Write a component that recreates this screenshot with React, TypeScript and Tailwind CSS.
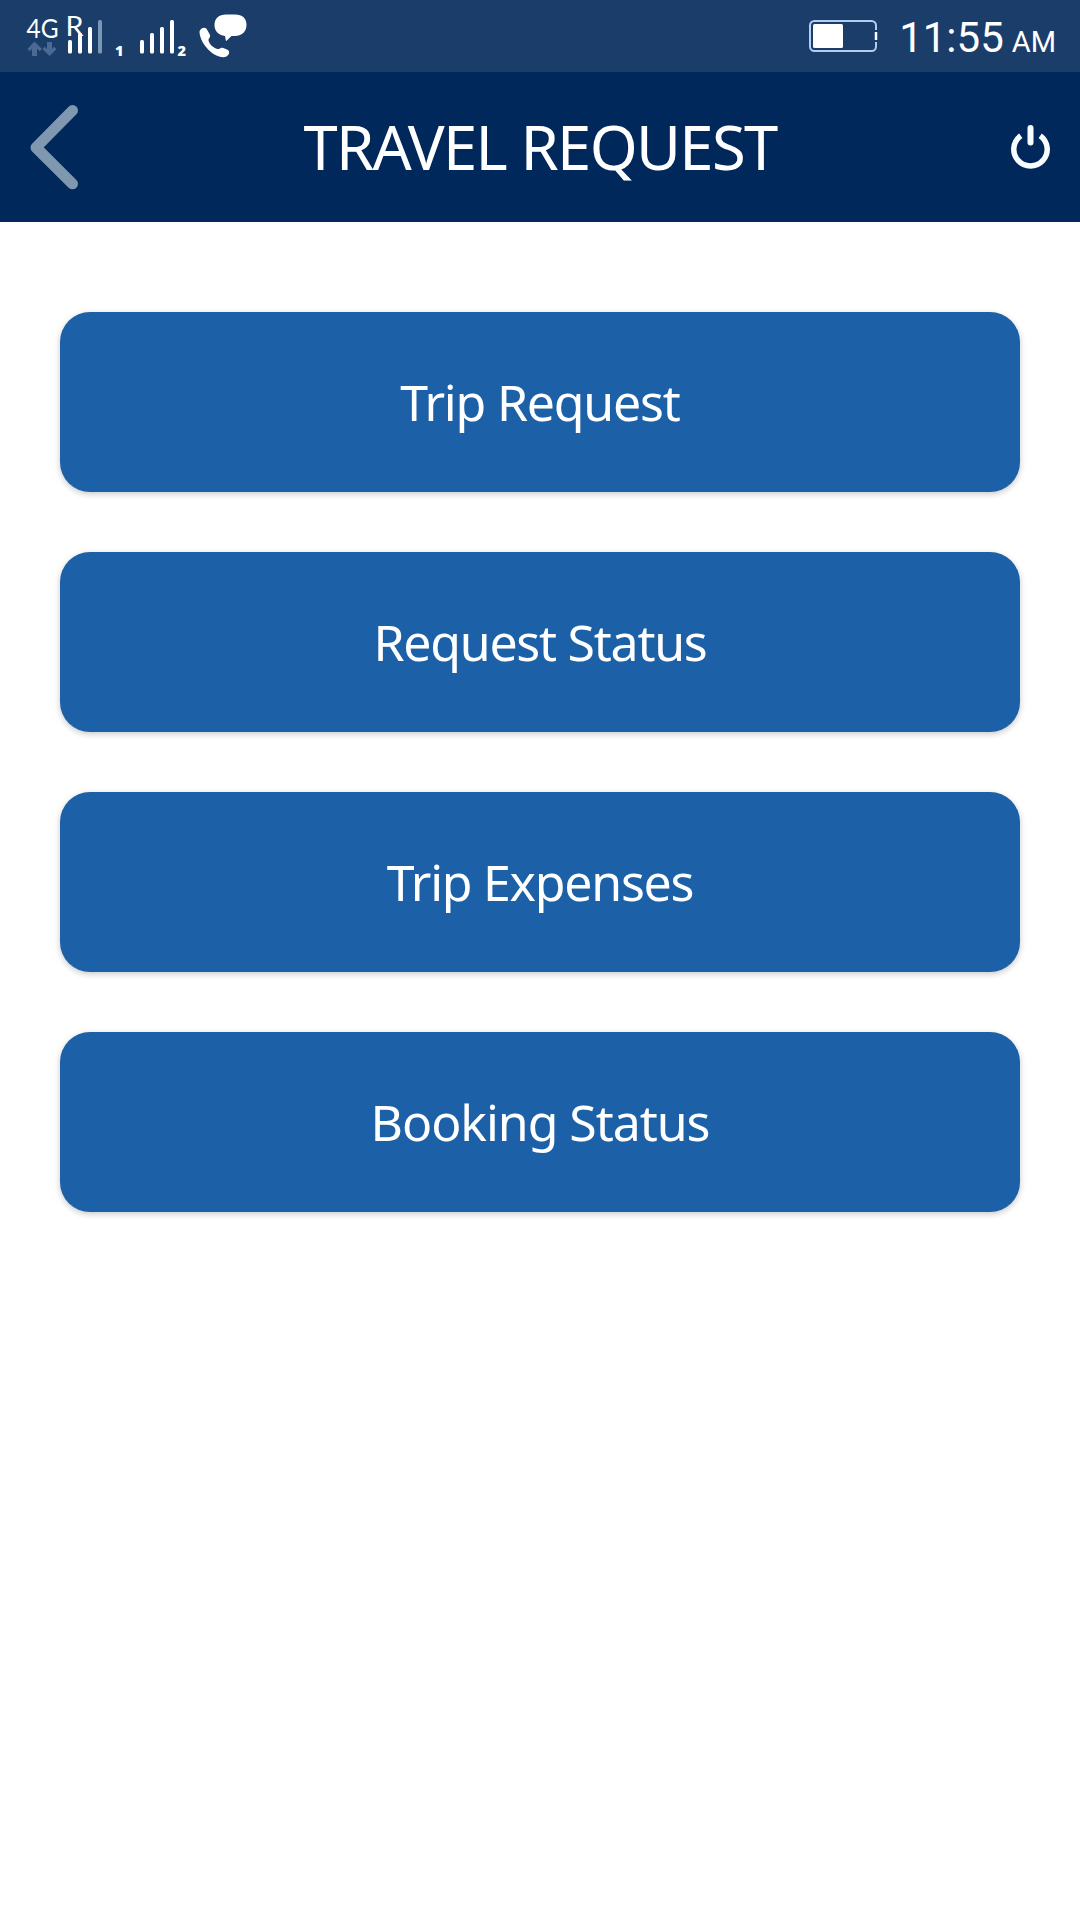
import React from "react";

interface MenuButtonProps {
  label: string;
  className?: string;
}

const MENU_ITEMS: MenuButtonProps[] = [
  { label: "Trip Request", className: "tracking-[-1.2px]" },
  { label: "Request Status", className: "tracking-[-1.25px]" },
  { label: "Trip Expenses", className: "tracking-[-1.25px]" },
  { label: "Booking Status", className: "tracking-[-1.05px]" },
];

const NetworkIcon: React.FC = () => (
  <svg width="172" height="72" viewBox="18 0 172 72" fill="#fff">
    {/* 4G + data arrows */}
    <text x="26.500" y="38" fontSize="27.500" fontFamily="Lato, sans-serif" textLength="32" lengthAdjust="spacingAndGlyphs">4G</text>
    <g fill="#4b6a93">
      <path d="M34.500 41.500 42 49l-2.300 2.300-2.700-2.500V56h-5v-7.200l-2.300 2.500L27.500 49z" />
      <path d="M49.500 56 42.500 49l2.300-2.300 2.200 2.200V42h5v6.900l2.200-2.200L56.500 49z" />
    </g>

    {/* SIM 1 */}
    <text x="65.500" y="35.500" fontSize="27" fontFamily="Lato, sans-serif" textLength="18" lengthAdjust="spacingAndGlyphs">R</text>
    <rect x="68" y="40" width="4" height="13.500" rx="1.500" />
    <rect x="78" y="33" width="4" height="20.500" rx="1.500" />
    <rect x="88" y="27" width="4" height="26.500" rx="1.500" />
    <rect x="98" y="20" width="4" height="33.500" rx="1.500" fill="#7d96b8" />
    <text x="115" y="56" fontSize="14.500" fontWeight="800" fontFamily="Open Sans, sans-serif">1</text>

    {/* SIM 2 */}
    <rect x="140" y="40" width="4" height="13.500" rx="1.500" />
    <rect x="150" y="33" width="4" height="20.500" rx="1.500" />
    <rect x="160" y="27" width="4" height="26.500" rx="1.500" />
    <rect x="170" y="20" width="4" height="33.500" rx="1.500" />
    <text x="177.500" y="56" fontSize="14.500" fontWeight="800" fontFamily="Open Sans, sans-serif">2</text>
  </svg>
);

const CallMessageIcon: React.FC = () => (
  <svg width="50" height="48" viewBox="198 12 50 48" fill="#fff">
    <path d="M226 14.500h9c7.500 0 11.500 4 11.500 10.300S242.500 36 235 36h-3.500l-5.500 5.300-1-5.400c-6.500-.6-10.500-4.600-10.500-10.900 0-6.500 4.500-10.500 11.500-10.500z" />
    <path d="M199.500 31.500c.7-3.200 5-5 7-2.800l3.300 5.800c1.200 2.500-1.500 4-1.300 5.800.5 3.800 5 7.700 9 8.700 2 .3 3-1.800 5.300-1.200l4.700 2c3 1.800 1.500 5.200-1 6.700-4.500 2-11.500-.8-16.500-5.300-5.500-4.700-10.500-12.700-10.500-19.700z" />
  </svg>
);

const BatteryIcon: React.FC = () => (
  <svg width="70" height="34" viewBox="808 19 70 34" fill="none">
    <path d="M876 30v-4.500a4.500 4.500 0 0 0-4.500-4.500h-57a4.500 4.500 0 0 0-4.500 4.500v21a4.500 4.500 0 0 0 4.500 4.500h57a4.500 4.500 0 0 0 4.500-4.500V42" stroke="#b3cdf0" strokeWidth="2" />
    <rect x="813" y="24" width="30" height="24" rx="1.500" fill="#fff" />
    <path d="M876 32v8" stroke="#fff" strokeWidth="2.500" />
  </svg>
);

const StatusBar: React.FC = () => (
  <div className="flex h-[72px] items-center bg-[#1b3d69] pr-[24px] pl-[18px] text-white">
    <NetworkIcon />
    <div className="ml-2">
      <CallMessageIcon />
    </div>
    <div className="ml-auto">
      <BatteryIcon />
    </div>
    <div className="ml-[21px] flex items-baseline gap-[8px] pt-1 font-[Roboto,sans-serif] leading-none">
      <span className="text-[42px]">11:55</span>
      <span className="text-[29px]">AM</span>
    </div>
  </div>
);

const Header: React.FC = () => (
  <header className="flex h-[150px] items-center justify-between bg-[#00285a] pr-[28px] pl-[28px]">
    <button type="button" aria-label="Back">
      <svg width="52" height="88" viewBox="28 103 52 88" fill="none">
        <path d="M72.500 110.500 36 147.500l36.500 36.300" stroke="#8097b0" strokeWidth="11" strokeLinecap="round" strokeLinejoin="round" />
      </svg>
    </button>
    <h1 className="text-[61.5px] leading-none tracking-[-1.65px] text-white">TRAVEL REQUEST</h1>
    <button type="button" aria-label="Log out" className="flex w-[52px] justify-end">
      <svg width="42" height="48" viewBox="1010 121.500 42 48" fill="none" stroke="#fafdff">
        <path d="M1020.800 134.200a16.700 16.700 0 1 0 19.400 0" strokeWidth="5.500" />
        <path d="M1030.500 126.500v14.500" strokeWidth="6" strokeLinecap="round" />
      </svg>
    </button>
  </header>
);

const MenuButton: React.FC<MenuButtonProps> = ({ label, className }) => (
  <button
    type="button"
    className="flex h-[180px] w-full items-center justify-center rounded-[30px] bg-[#1c61a7] text-[50px] leading-none text-white shadow-[0_2px_6px_rgba(0,0,0,0.22)]"
  >
    <span className={className}>{label}</span>
  </button>
);

export default function App() {
  return (
    <div className="flex h-[1920px] w-[1080px] flex-col bg-white font-['Noto_Sans','Open_Sans',sans-serif]">
      <StatusBar />
      <Header />
      <main className="flex flex-1 flex-col gap-[60px] px-[60px] pt-[90px]">
        {MENU_ITEMS.map((item) => (
          <MenuButton key={item.label} {...item} />
        ))}
      </main>
    </div>
  );
}
